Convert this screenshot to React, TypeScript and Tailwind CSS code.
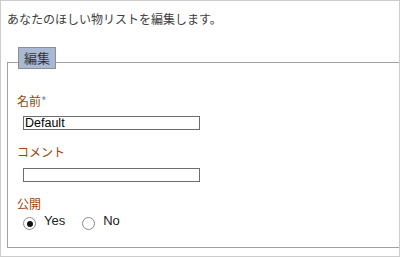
import React from 'react';

const jp = "font-['Noto_Sans_CJK_JP','Noto_Sans',sans-serif]";
const latin = "font-['Liberation_Sans','Noto_Sans_CJK_JP',sans-serif]";

const Radio = ({ label, checked }: { label: string; checked?: boolean }) => (
  <label className="flex items-start">
    <span className="mt-[2px] flex h-[13px] w-[13px] items-center justify-center rounded-full border border-[#8a8a8a] bg-white">
      {checked && <span className="h-[6px] w-[6px] rounded-full bg-[#111]"></span>}
    </span>
    <span className={`ml-[8px] text-[13px] leading-[12px] text-[#222] ${latin}`}>{label}</span>
  </label>
);

const App = () => {
  return (
    <div className="relative h-[257px] w-[400px] overflow-hidden border border-[#cccccc] bg-white">
      <p className={`mt-[9px] ml-[6px] text-[12px] leading-[18px] text-[#404040] ${jp}`}>
        あなたのほしい物リストを編集します。
      </p>

      <div className="relative mt-[34px] ml-[6px] h-[186px] w-[420px] border border-[#a0a0a0]">
        <div
          className={`absolute -top-[16px] left-[10px] h-[22px] border border-[#8e8e8e] bg-[#a9b9d3] px-[5px] text-[13px] leading-[20px] text-[#333] ${jp}`}
        >
          編集
        </div>

        <div className="flex flex-col pl-[9px]">
          <div className={`mt-[30px] text-[12px] leading-[16px] text-[#9e3f0c] ${jp}`}>
            名前<span className="text-[#6f8db3]">*</span>
          </div>
          <input
            defaultValue="Default"
            className={`mt-[7px] ml-[6px] box-border h-[14px] w-[177px] border border-[#6d6d6d] px-[1px] text-[12.5px] leading-[12px] text-black outline-none ${latin}`}
          />

          <div className={`mt-[14px] text-[12px] leading-[16px] text-[#9e3f0c] ${jp}`}>コメント</div>
          <input
            className={`mt-[8px] ml-[6px] box-border h-[14px] w-[177px] border border-[#6d6d6d] text-[12px] outline-none ${latin}`}
          />

          <div className={`mt-[14px] text-[12px] leading-[16px] text-[#9e3f0c] ${jp}`}>公開</div>
          <div className="mt-[3px] ml-[6px] flex">
            <Radio label="Yes" checked />
            <div className="ml-[17px]">
              <Radio label="No" />
            </div>
          </div>
        </div>
      </div>
    </div>
  );
};

export default App;
